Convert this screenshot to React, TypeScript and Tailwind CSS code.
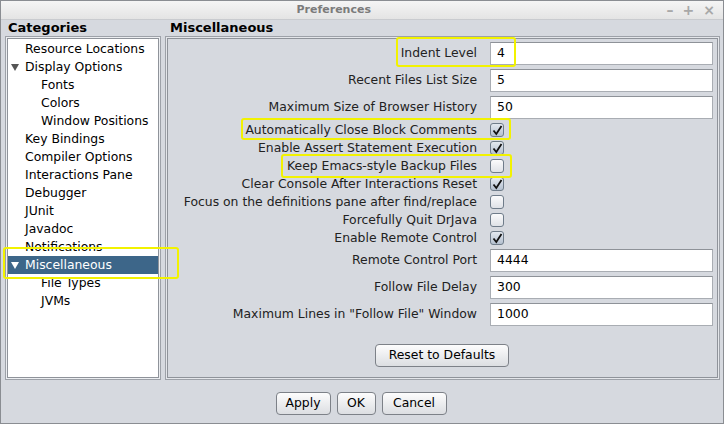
import React from 'react';

const font = { fontFamily: '"DejaVu Sans", "Liberation Sans", sans-serif' };

type TreeItem = { label: string; level: number; open?: boolean; selected?: boolean };

const tree: TreeItem[] = [
  { label: 'Resource Locations', level: 1 },
  { label: 'Display Options', level: 1, open: true },
  { label: 'Fonts', level: 2 },
  { label: 'Colors', level: 2 },
  { label: 'Window Positions', level: 2 },
  { label: 'Key Bindings', level: 1 },
  { label: 'Compiler Options', level: 1 },
  { label: 'Interactions Pane', level: 1 },
  { label: 'Debugger', level: 1 },
  { label: 'JUnit', level: 1 },
  { label: 'Javadoc', level: 1 },
  { label: 'Notifications', level: 1 },
  { label: 'Miscellaneous', level: 1, open: true, selected: true },
  { label: 'File Types', level: 2 },
  { label: 'JVMs', level: 2 },
];

const checks: [string, boolean][] = [
  ['Automatically Close Block Comments', true],
  ['Enable Assert Statement Execution', true],
  ['Keep Emacs-style Backup Files', false],
  ['Clear Console After Interactions Reset', true],
  ['Focus on the definitions pane after find/replace', false],
  ['Forcefully Quit DrJava', false],
  ['Enable Remote Control', true],
];

function Field({ label, value }: { label: string; value: string }) {
  return (
    <div className="flex items-center h-[23px]">
      <div className="flex-1 text-right pr-[13px] text-[12.4px] text-[#222] whitespace-nowrap">{label}</div>
      <div className="w-[223px] h-[23px] bg-white border border-[#a9adb3] border-t-[#8e9298] flex items-center pl-[6px] text-[12.4px] text-black">
        {value}
      </div>
    </div>
  );
}

function Check({ label, on }: { label: string; on: boolean }) {
  return (
    <div className="flex items-center h-[18px]">
      <div className="flex-1 text-right pr-[13px] text-[12.4px] text-[#222] whitespace-nowrap">{label}</div>
      <div className="w-[223px] flex items-center">
        <div
          className={
            'w-[14px] h-[14px] rounded-[3px] border border-[#6f7c8a] flex items-center justify-center ' +
            (on ? 'bg-gradient-to-b from-[#e4e9f0] to-[#b4c0cf]' : 'bg-gradient-to-b from-[#fbfbfc] to-[#dfe2e7]')
          }
        >
          {on && (
            <svg width="11" height="11" viewBox="0 0 11 11">
              <path d="M1.5 5.5 L4.3 9 L9.5 1" stroke="#111" strokeWidth="1.8" fill="none" />
            </svg>
          )}
        </div>
      </div>
    </div>
  );
}

function Btn({ children, w }: { children: React.ReactNode; w: string }) {
  return (
    <button
      className={
        w +
        ' h-[23px] rounded-[4px] border border-[#7d8188] bg-gradient-to-b from-[#fdfdfd] to-[#dcdee2] text-[12.4px] text-black flex items-center justify-center'
      }
    >
      {children}
    </button>
  );
}

export default function App() {
  return (
    <div className="w-[724px] h-[424px] relative overflow-hidden bg-[#d6d9df] border border-[#8a8d92] flex flex-col" style={font}>
      {/* title bar */}
      <div className="h-[19px] shrink-0 bg-gradient-to-b from-[#f5f5f5] to-[#e4e4e4] border-b border-[#c9cbcf] flex items-center">
        <div className="flex-1 text-center text-[11px] font-bold text-[#7b7b7b]">Preferences</div>
        <div className="flex items-center gap-[9px] pr-[8px] text-[#a8a8a8] text-[14px] font-bold">
          <span>–</span>
          <span>+</span>
          <span>×</span>
        </div>
      </div>

      {/* headers */}
      <div className="flex h-[15px] items-center text-[13px] font-bold text-black">
        <div className="w-[169px] pl-[7px]">Categories</div>
        <div>Miscellaneous</div>
      </div>

      <div className="flex pl-[4px] pr-[3px] pt-[1px] gap-[4px]">
        {/* tree */}
        <div className="w-[156px] h-[344px] border border-[#9da1a8] p-[1px] bg-[#eceef1]">
          <div className="w-full h-full border border-[#8f939a] bg-white pt-[1px]">
            {tree.map((t) => (
              <div
                key={t.label}
                className={
                  'h-[18px] flex items-center text-[12.4px] ' +
                  (t.selected ? 'bg-[#3d6689] text-white' : 'text-black')
                }
              >
                <div className={t.level === 1 ? 'w-[17px] flex justify-end pr-[6px]' : 'w-[33px]'}>
                  {t.level === 1 && t.open && (
                    <svg width="8" height="8" viewBox="0 0 8 8">
                      <path d="M0 1 L8 1 L4 8 Z" fill={t.selected ? '#fff' : '#555'} />
                    </svg>
                  )}
                </div>
                <span className="whitespace-nowrap">{t.label}</span>
              </div>
            ))}
          </div>
        </div>

        {/* settings panel */}
        <div className="flex-1 h-[344px] border border-[#9da1a8] p-[1px] bg-[#e4e6ea]">
          <div className="w-full h-full border border-[#8f939a] bg-[#d6d9df] pt-[3px] pr-[4px] flex flex-col">
            <div className="flex flex-col gap-[4px]">
              <Field label="Indent Level" value="4" />
              <Field label="Recent Files List Size" value="5" />
              <Field label="Maximum Size of Browser History" value="50" />
            </div>
            <div className="flex flex-col mt-[2px]">
              {checks.map(([l, on]) => (
                <Check key={l} label={l} on={on} />
              ))}
            </div>
            <div className="flex flex-col gap-[4px] mt-[2px]">
              <Field label="Remote Control Port" value="4444" />
              <Field label="Follow File Delay" value="300" />
              <Field label="Maximum Lines in &quot;Follow File&quot; Window" value="1000" />
            </div>
            <div className="flex justify-center mt-[18px] pl-[3px]">
              <Btn w="w-[134px]">Reset to Defaults</Btn>
            </div>
          </div>
        </div>
      </div>

      {/* bottom buttons */}
      <div className="flex justify-center gap-[6px] mt-[12px] pr-[2px]">
        <Btn w="w-[55px]">Apply</Btn>
        <Btn w="w-[39px]">OK</Btn>
        <Btn w="w-[65px]">Cancel</Btn>
      </div>

      {/* yellow annotation boxes */}
      <div className="absolute left-[395px] top-[36px] w-[120px] h-[30px] border-2 border-[#f2f200] rounded-[3px]" />
      <div className="absolute left-[240px] top-[117px] w-[270px] h-[22px] border-2 border-[#f2f200] rounded-[3px]" />
      <div className="absolute left-[280px] top-[153px] w-[231px] h-[24px] border-2 border-[#f2f200] rounded-[3px]" />
      <div className="absolute left-[2px] top-[246px] w-[176px] h-[32px] border-2 border-[#f2f200] rounded-[3px]" />
    </div>
  );
}
